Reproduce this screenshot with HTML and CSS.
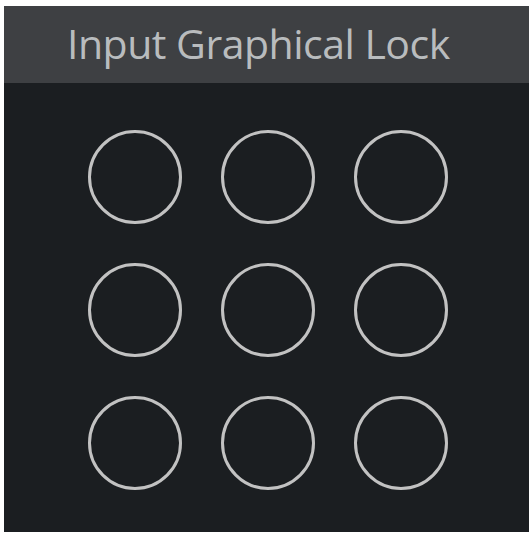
FILE: index.html
```html
<!DOCTYPE html>
<html>
<head>
<meta charset="utf-8">
<link rel="stylesheet" href="styles.css">
</head>
<body>
<div class="panel">
  <div class="header"><span class="title">Input Graphical Lock</span></div>
  <div class="body">
    <div class="grid">
      <div class="dot"></div><div class="dot"></div><div class="dot"></div>
      <div class="dot"></div><div class="dot"></div><div class="dot"></div>
      <div class="dot"></div><div class="dot"></div><div class="dot"></div>
    </div>
  </div>
</div>
</body>
</html>
```
FILE: styles.css
```css
html, body {
  margin: 0;
  padding: 0;
  background: #ffffff;
}
body {
  padding: 6px 3px 2px 4px;
  box-sizing: border-box;
  width: 532px;
  height: 534px;
}
.panel {
  width: 525px;
  height: 526px;
  background: #1b1e21;
  display: flex;
  flex-direction: column;
}
.header {
  height: 77px;
  background: #3e4043;
  display: flex;
  align-items: center;
  padding-left: 63px;
  box-sizing: border-box;
}
.title {
  font-family: "Open Sans", "Noto Sans", sans-serif;
  font-size: 41px;
  letter-spacing: -0.5px;
  color: #b9bcbe;
  line-height: 1;
  position: relative;
  top: -1px;
}
.body {
  flex: 1;
  padding: 47px 0 0 84px;
}
.grid {
  display: grid;
  grid-template-columns: repeat(3, 94px);
  grid-auto-rows: 94px;
  column-gap: 39px;
  row-gap: 39px;
}
.dot {
  border: 3px solid #c2c2c2;
  border-radius: 50%;
  box-sizing: border-box;
}
```
